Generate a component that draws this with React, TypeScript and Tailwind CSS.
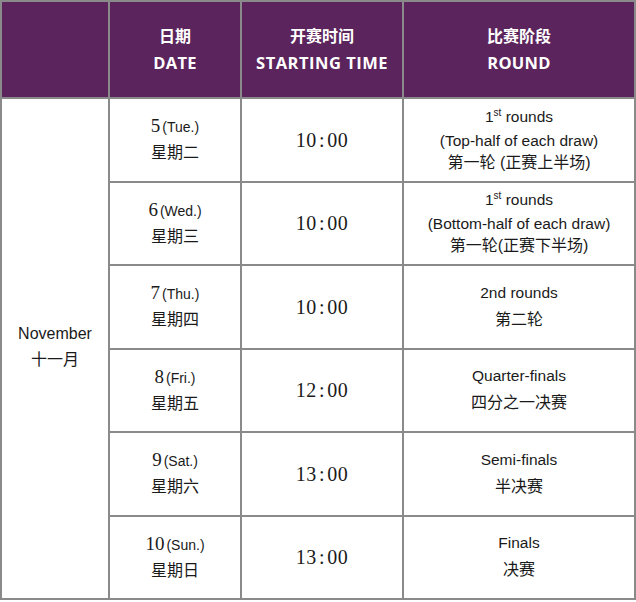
const rows = [
  { d: "5", w: "(Tue.)", cn: "星期二", t: "10:00", r: ["1st", "(Top-half of each draw)", "第一轮 (正赛上半场)"] },
  { d: "6", w: "(Wed.)", cn: "星期三", t: "10:00", r: ["1st", "(Bottom-half of each draw)", "第一轮(正赛下半场)"] },
  { d: "7", w: "(Thu.)", cn: "星期四", t: "10:00", r: ["2nd rounds", "第二轮"] },
  { d: "8", w: "(Fri.)", cn: "星期五", t: "12:00", r: ["Quarter-finals", "四分之一决赛"] },
  { d: "9", w: "(Sat.)", cn: "星期六", t: "13:00", r: ["Semi-finals", "半决赛"] },
  { d: "10", w: "(Sun.)", cn: "星期日", t: "13:00", r: ["Finals", "决赛"] },
];

const sans = "font-['Liberation_Sans','Noto_Sans_CJK_SC',sans-serif]";
const serif = "font-['Liberation_Serif','Noto_Serif_CJK_SC',serif]";

function RoundCell({ lines }: { lines: string[] }) {
  if (lines[0] === "1st") {
    return (
      <div className="flex flex-col items-center leading-[22px] text-[15.5px]">
        <div>
          1<span className="text-[10px] relative -top-[6px]">st</span> rounds
        </div>
        <div>{lines[1]}</div>
        <div className="text-[16px]">{lines[2]}</div>
      </div>
    );
  }
  return (
    <div className="flex flex-col items-center gap-[6px] text-[15.5px]">
      <div className="leading-[20px]">{lines[0]}</div>
      <div className="leading-[22px] text-[16px]">{lines[1]}</div>
    </div>
  );
}

export default function App() {
  return (
    <div className={`w-[636px] h-[602px] bg-white ${sans} text-[#1a1a1a]`}>
      <table className="w-[636px] border-collapse table-fixed">
        <colgroup>
          <col className="w-[108px]" />
          <col className="w-[132px]" />
          <col className="w-[162px]" />
          <col />
        </colgroup>
        <thead>
          <tr className="h-[97px] bg-[#5b245c] text-white font-bold text-[16px] leading-[26px]">
            <th className="border-2 border-[#8a8a8a]"></th>
            <th className="border-2 border-[#8a8a8a] font-bold">
              <div>日期</div>
              <div className="font-['Open_Sans','Liberation_Sans',sans-serif] text-[16.5px] tracking-[0.3px]">DATE</div>
            </th>
            <th className="border-2 border-[#8a8a8a] font-bold">
              <div>开赛时间</div>
              <div className="font-['Open_Sans','Liberation_Sans',sans-serif] text-[16.5px] tracking-[0.5px]">STARTING TIME</div>
            </th>
            <th className="border-2 border-[#8a8a8a] font-bold">
              <div>比赛阶段</div>
              <div className="font-['Open_Sans','Liberation_Sans',sans-serif] text-[16.5px] tracking-[0.3px]">ROUND</div>
            </th>
          </tr>
        </thead>
        <tbody>
          {rows.map((row, i) => (
            <tr key={i} className="h-[83.5px]">
              {i === 0 && (
                <td rowSpan={6} className="border-2 border-[#8a8a8a] text-center align-middle text-[16px] leading-[26px] pb-[4px]">
                  <div>November</div>
                  <div>十一月</div>
                </td>
              )}
              <td className="border-2 border-[#8a8a8a] text-center align-middle">
                <div className="flex flex-col items-center leading-[26px]">
                  <div className="flex items-baseline">
                    <span className={`${serif} text-[19px]`}>{row.d}</span>
                    <span className="text-[14px] ml-[2px]">{row.w}</span>
                  </div>
                  <div className="text-[16px]">{row.cn}</div>
                </div>
              </td>
              <td className={`border-2 border-[#8a8a8a] text-center align-middle ${serif} text-[20px] tracking-[0.5px]`}>
                {row.t.replace(":", "\u200a:\u200a")}
              </td>
              <td className="border-2 border-[#8a8a8a] text-center align-middle">
                <RoundCell lines={row.r} />
              </td>
            </tr>
          ))}
        </tbody>
      </table>
    </div>
  );
}
